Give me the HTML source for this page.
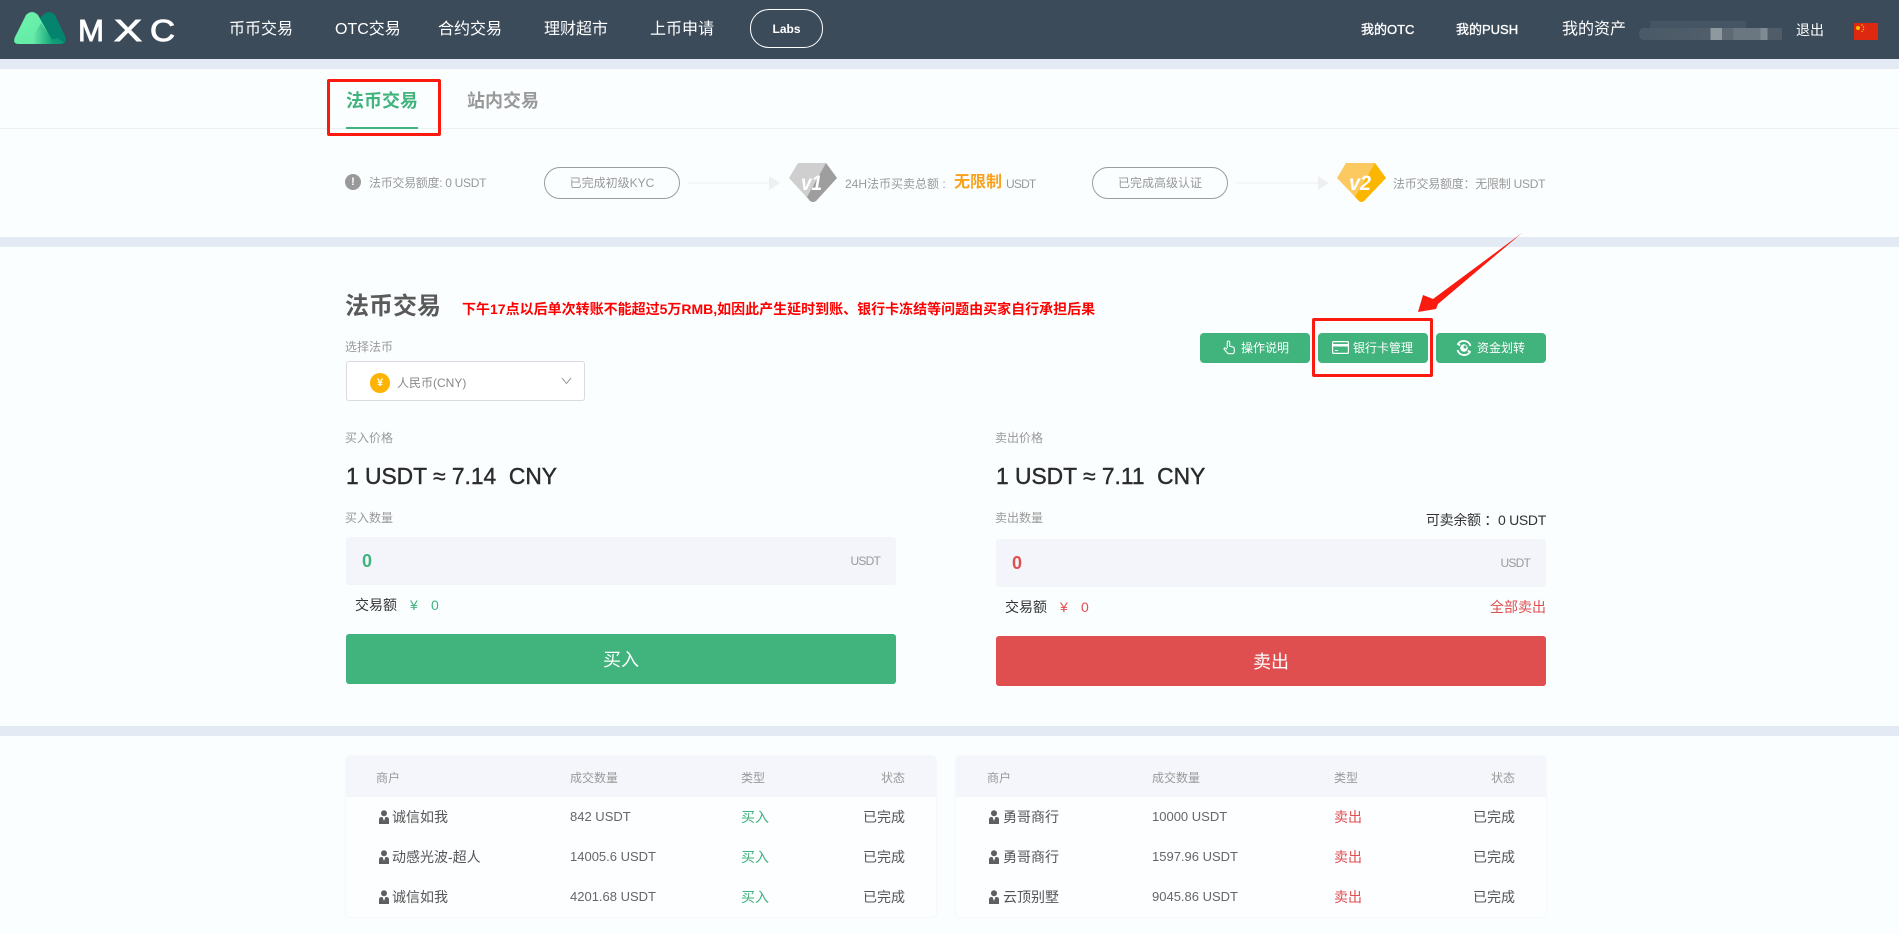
<!DOCTYPE html>
<html lang="zh"><head><meta charset="utf-8"><title>MXC</title>
<style>
html,body{margin:0;padding:0}
body{width:1899px;height:934px;overflow:hidden;position:relative;background:#fbfeff;font-family:"Liberation Sans","Noto Sans CJK SC",sans-serif;color:#333}
.a{position:absolute;white-space:nowrap;line-height:20px;height:20px}
.r{text-align:right}
.box{position:absolute}
.nav{font-size:16px;color:#fff;top:20px}
.g{color:#999;font-size:12px}
.us{letter-spacing:-.8px}
.pill{position:absolute;top:167px;height:30px;width:134px;border:1px solid #9c9c9c;border-radius:16px;text-align:center;line-height:30px;font-size:12px;color:#999;background:#fbfeff}
.btn{position:absolute;top:333px;width:110px;height:30px;background:#41b37d;border-radius:4px;color:#fff;font-size:12px;line-height:30px}
.inp{position:absolute;width:550px;height:48px;background:#f3f5fa;border-radius:3px}
.big{position:absolute;width:550px;height:50px;border-radius:3px;color:#fff;font-size:18px;line-height:52px;text-align:center}
.price{font-size:22.800px;color:#2b2b2b;line-height:30px;height:30px;-webkit-text-stroke:.4px #2b2b2b}
.tb{position:absolute;top:756px;width:590px;height:161px;border-radius:4px;box-shadow:0 0 2px #e9edf4;background:#fcfeff}
.th{position:absolute;left:0;top:0;width:100%;height:41px;background:#f4f6fb;border-radius:4px 4px 0 0}
.n{font-size:14px;color:#555}
.q{font-size:13px;color:#666}
.t14{font-size:14px}
.hb{font-size:13px;color:#fff;-webkit-text-stroke:.35px #fff;top:20px}
</style></head><body>

<!-- Header -->
<div class="box" style="left:0;top:0;width:1899px;height:59px;background:#3c4b5a"></div>
<svg class="box" style="left:0;top:0" width="190" height="59" viewBox="0 0 190 59">
<defs>
<linearGradient id="l1" x1="0" y1="0" x2="1" y2="1"><stop offset="0" stop-color="#6ff3ae"/><stop offset="1" stop-color="#5ee9a3"/></linearGradient>
<linearGradient id="l2" x1="0" y1="0" x2="1" y2="0"><stop offset="0" stop-color="#6fefae"/><stop offset=".85" stop-color="#16a577"/></linearGradient>
</defs>
<path d="M43 15 Q49 9 55 15 L65 36 Q68 44 60 44 H40 L35 24Z" fill="#04836e"/>
<path d="M26 15 Q32 9 38 15 L54 44 H19 Q12 44 15 37Z" fill="url(#l1)"/>
<path d="M41 23 L55 44 H36 Q30 44 32 38Z" fill="url(#l2)"/>
<path d="M55 44 H60 Q62 44 64 42.500 L57 38 L52 39.500Z" fill="#0f9a78"/>
<g fill="#fff" stroke="#fff" stroke-width=".9" font-family="'Liberation Sans',sans-serif" font-size="31">
<text x="78" y="41" textLength="26" lengthAdjust="spacingAndGlyphs">M</text>
<text x="114" y="41" textLength="28" lengthAdjust="spacingAndGlyphs">X</text>
<text x="150" y="41" textLength="25" lengthAdjust="spacingAndGlyphs">C</text>
</g>
</svg>
<div class="a nav" style="left:229px">币币交易</div>
<div class="a nav" style="left:335px">OTC交易</div>
<div class="a nav" style="left:438px">合约交易</div>
<div class="a nav" style="left:544px">理财超市</div>
<div class="a nav" style="left:650px">上币申请</div>
<div class="box" style="left:750px;top:9px;width:71px;height:37px;border:1.5px solid #fff;border-radius:19px;color:#fff;font-size:12px;font-weight:700;text-align:center;line-height:38px">Labs</div>
<div class="a hb" style="left:1361px">我的OTC</div>
<div class="a hb" style="left:1456px">我的PUSH</div>
<div class="a" style="left:1562px;top:20px;font-size:16px;color:#fff">我的资产</div>
<div class="box" style="left:1639px;top:28px;width:143px;height:12px;border-radius:5px 0 0 5px;background:linear-gradient(90deg,#4b5a67,#505d6a 50%,#8e989f 50%,#8e989f 58%,#5d6974 58%,#5d6974 66%,#6a7680 66%,#6a7680 85%,#808a93 85%,#808a93 90%,#505d69 90%)"></div>
<div class="box" style="left:1650px;top:21px;width:96px;height:7px;background:#465563"></div>
<div class="a" style="left:1796px;top:20px;font-size:14px;color:#fff">退出</div>
<svg class="box" style="left:1854px;top:23px" width="24" height="17" viewBox="0 0 24 17"><rect width="24" height="17" fill="#de2910"/><circle cx="4" cy="5" r="2" fill="#f5c400"/><circle cx="8" cy="2" r=".7" fill="#f5c400"/><circle cx="9.500" cy="4" r=".7" fill="#f5c400"/><circle cx="9.500" cy="6.500" r=".7" fill="#f5c400"/><circle cx="8" cy="8.500" r=".7" fill="#f5c400"/></svg>

<!-- Bands -->
<div class="box" style="left:0;top:59px;width:1899px;height:10px;background:#e4eaf4"></div>
<div class="box" style="left:0;top:237px;width:1899px;height:10px;background:#e4eaf4"></div>
<div class="box" style="left:0;top:726px;width:1899px;height:10px;background:#e4eaf4"></div>

<!-- Tabs -->
<div class="box" style="left:0;top:128px;width:1899px;height:1px;background:#eeeff1"></div>
<div class="a" style="left:346px;top:91px;font-size:18px;font-weight:700;color:#41b37d">法币交易</div>
<div class="a" style="left:467px;top:91px;font-size:18px;font-weight:700;color:#999">站内交易</div>
<div class="box" style="left:346px;top:127px;width:72px;height:2px;background:#41b37d"></div>
<div class="box" style="left:327px;top:79px;width:108px;height:51px;border:3px solid #fb1a10;border-radius:2px"></div>

<!-- Steps -->
<div class="box" style="left:345px;top:174px;width:16px;height:16px;border-radius:50%;background:#999;color:#fff;font-size:11px;font-weight:700;text-align:center;line-height:16px">!</div>
<div class="a g" style="left:369px;top:173px;letter-spacing:-.3px">法币交易额度: 0 USDT</div>
<div class="pill" style="left:544px">已完成初级KYC</div>
<svg class="box" style="left:688px;top:175px" width="92" height="16"><rect x="0" y="7.500" width="81" height="1" fill="#eeeff1"/><path d="M81 1 L92 8 L81 15Z" fill="#eeeff1"/></svg>
<svg class="box" style="left:789px;top:163px" width="48" height="40" viewBox="0 0 48 40">
<path d="M9 0 H37 L48 15 L27 38 Q24 40 21 38 L0 15Z" fill="#cfcfcf"/>
<path d="M37 0 L48 15 L27 38 Q24 40 21 38 L18 34Z" fill="#9e9e9e"/>
<text x="12" y="27" font-family="'Liberation Sans',sans-serif" font-size="21" font-weight="700" font-style="italic" fill="#fff" textLength="21" lengthAdjust="spacingAndGlyphs">v1</text>
</svg>
<div class="a g" style="left:845px;top:174px">24H法币买卖总额 :</div>
<div class="a" style="left:954px;top:173px;font-size:16px;font-weight:700;color:#f9a11b">无限制</div>
<div class="a g us" style="left:1006px;top:174px">USDT</div>
<div class="pill" style="left:1092px">已完成高级认证</div>
<svg class="box" style="left:1236px;top:175px" width="93" height="16"><rect x="0" y="7.500" width="82" height="1" fill="#eeeff1"/><path d="M82 1 L93 8 L82 15Z" fill="#eeeff1"/></svg>
<svg class="box" style="left:1337px;top:163px" width="49" height="40" viewBox="0 0 49 40">
<path d="M9 0 H38 L49 15 L27 38 Q24.500 40 22 38 L0 15Z" fill="#fbc95f"/>
<path d="M38 0 L49 15 L27 38 Q24.500 40 22 38 L18 34Z" fill="#fdb600"/>
<text x="12" y="27" font-family="'Liberation Sans',sans-serif" font-size="21" font-weight="700" font-style="italic" fill="#fff" textLength="22" lengthAdjust="spacingAndGlyphs">v2</text>
</svg>
<div class="a g" style="left:1393px;top:174px;letter-spacing:-.25px">法币交易额度：无限制 USDT</div>

<!-- Title -->
<div class="a" style="left:345px;top:297px;font-size:24px;font-weight:700;color:#5a5a5a">法币交易</div>
<div class="a" style="left:462px;top:299px;font-size:14px;font-weight:700;color:#ff0000">下午17点以后单次转账不能超过5万RMB,如因此产生延时到账、银行卡冻结等问题由买家自行承担后果</div>
<div class="a g" style="left:345px;top:337px">选择法币</div>
<div class="box" style="left:346px;top:361px;width:237px;height:38px;border:1px solid #d9dbe0;border-radius:3px;background:#fff"></div>
<div class="box" style="left:370px;top:373px;width:20px;height:20px;border-radius:50%;background:#fdb300;color:#fff;font-size:11px;font-weight:700;text-align:center;line-height:20px">¥</div>
<div class="a g" style="left:397px;top:373px;color:#888">人民币(CNY)</div>
<svg class="box" style="left:561px;top:377px" width="11" height="8"><path d="M1 1 L5.500 6.500 L10 1" fill="none" stroke="#999" stroke-width="1"/></svg>

<!-- Action buttons -->
<div class="btn" style="left:1200px">
<svg class="box" style="left:22px;top:7px" width="14" height="15" viewBox="0 0 14 17"><path d="M5 9 V2.500 a1.400 1.400 0 0 1 2.800 0 V7 l4 1 Q13 8.500 13 10 V13 Q13 15.500 10.500 15.500 H7 Q5.500 15.500 4.500 14 L1.500 10.500 Q1 9 2.500 9 L5 10.500" fill="none" stroke="#fff" stroke-width="1.200"/></svg>
<span style="position:absolute;left:41px">操作说明</span></div>
<div class="btn" style="left:1318px">
<svg class="box" style="left:14px;top:8px" width="17" height="13" viewBox="0 0 17 13"><rect x=".6" y=".6" width="15.800" height="11.800" rx="1" fill="none" stroke="#fff" stroke-width="1.200"/><rect x="0" y="3" width="17" height="2.500" fill="#fff"/><rect x="3" y="9" width="3" height="1" fill="#fff"/></svg>
<span style="position:absolute;left:35px">银行卡管理</span></div>
<div class="btn" style="left:1436px">
<svg class="box" style="left:20px;top:7px" width="16" height="16" viewBox="0 0 16 16"><path d="M14.500 6 A7 7 0 0 0 2 4 L4 5.500 M1.500 10 A7 7 0 0 0 14 12 L12 10.500" fill="none" stroke="#fff" stroke-width="1.800"/><circle cx="8" cy="8" r="3.800" fill="#fff"/><circle cx="9" cy="7" r="1.500" fill="#41b37d"/></svg>
<span style="position:absolute;left:41px">资金划转</span></div>

<!-- Red box + arrow -->
<div class="box" style="left:1312px;top:318px;width:115px;height:53px;border:3px solid #fb1a10;border-radius:2px"></div>
<svg class="box" style="left:1410px;top:228px" width="120" height="90" viewBox="0 0 120 90"><path d="M112 5 L23 71 L13 67 L8 84 L26 81 L28 76Z" fill="#fb1a10"/></svg>

<!-- Buy -->
<div class="a g" style="left:345px;top:428px">买入价格</div>
<div class="a price" style="left:346px;top:461px">1 USDT ≈ 7.14&nbsp; CNY</div>
<div class="a g" style="left:345px;top:508px">买入数量</div>
<div class="inp" style="left:346px;top:537px"></div>
<div class="a" style="left:362px;top:551px;font-size:18px;font-weight:700;color:#41b37d">0</div>
<div class="a g r us" style="left:780px;width:100px;top:551px">USDT</div>
<div class="a t14" style="left:355px;top:595px">交易额</div>
<div class="a t14" style="left:410px;top:595px;color:#41b37d">¥</div>
<div class="a t14" style="left:431px;top:595px;color:#41b37d">0</div>
<div class="big" style="left:346px;top:634px;background:#41b37d">买入</div>

<!-- Sell -->
<div class="a g" style="left:995px;top:428px">卖出价格</div>
<div class="a price" style="left:996px;top:461px">1 USDT ≈ 7.11&nbsp; CNY</div>
<div class="a g" style="left:995px;top:508px">卖出数量</div>
<div class="a r" style="left:1346px;width:200px;top:510px;font-size:14px;letter-spacing:-.3px">可卖余额 ：0 USDT</div>
<div class="inp" style="left:996px;top:539px"></div>
<div class="a" style="left:1012px;top:553px;font-size:18px;font-weight:700;color:#e04f50">0</div>
<div class="a g r us" style="left:1430px;width:100px;top:553px">USDT</div>
<div class="a t14" style="left:1005px;top:597px">交易额</div>
<div class="a t14" style="left:1060px;top:597px;color:#e04f50">¥</div>
<div class="a t14" style="left:1081px;top:597px;color:#e04f50">0</div>
<div class="a t14 r" style="left:1446px;width:100px;top:597px;color:#e04f50">全部卖出</div>
<div class="big" style="left:996px;top:636px;background:#e04f50">卖出</div>

<!-- Left table -->
<div class="tb" style="left:346px"><div class="th"></div></div>
<div class="a g" style="left:376px;top:768px">商户</div>
<div class="a g" style="left:570px;top:768px">成交数量</div>
<div class="a g" style="left:741px;top:768px">类型</div>
<div class="a g r" style="left:805px;width:100px;top:768px">状态</div>
<svg width="0" height="0" style="position:absolute"><defs><g id="u"><circle cx="5" cy="3.200" r="3" fill="#5f5f5f"/><path d="M0 14 V9.500 Q0 7.500 2 7 L3.500 7 L5 11 L6.500 7 L8 7 Q10 7.500 10 9.500 V14Z" fill="#5f5f5f"/></g></defs></svg>

<svg class="box" style="left:379px;top:810px" width="10" height="14"><use href="#u"/></svg>
<div class="a n" style="left:392px;top:807px">诚信如我</div>
<div class="a q" style="left:570px;top:807px">842 USDT</div>
<div class="a t14" style="left:741px;top:807px;color:#41b37d">买入</div>
<div class="a n r" style="left:805px;width:100px;top:807px">已完成</div>

<svg class="box" style="left:379px;top:850px" width="10" height="14"><use href="#u"/></svg>
<div class="a n" style="left:392px;top:847px">动感光波-超人</div>
<div class="a q" style="left:570px;top:847px">14005.6 USDT</div>
<div class="a t14" style="left:741px;top:847px;color:#41b37d">买入</div>
<div class="a n r" style="left:805px;width:100px;top:847px">已完成</div>

<svg class="box" style="left:379px;top:890px" width="10" height="14"><use href="#u"/></svg>
<div class="a n" style="left:392px;top:887px">诚信如我</div>
<div class="a q" style="left:570px;top:887px">4201.68 USDT</div>
<div class="a t14" style="left:741px;top:887px;color:#41b37d">买入</div>
<div class="a n r" style="left:805px;width:100px;top:887px">已完成</div>

<!-- Right table -->
<div class="tb" style="left:956px"><div class="th"></div></div>
<div class="a g" style="left:987px;top:768px">商户</div>
<div class="a g" style="left:1152px;top:768px">成交数量</div>
<div class="a g" style="left:1334px;top:768px">类型</div>
<div class="a g r" style="left:1415px;width:100px;top:768px">状态</div>

<svg class="box" style="left:989px;top:810px" width="10" height="14"><use href="#u"/></svg>
<div class="a n" style="left:1003px;top:807px">勇哥商行</div>
<div class="a q" style="left:1152px;top:807px">10000 USDT</div>
<div class="a t14" style="left:1334px;top:807px;color:#e04f50">卖出</div>
<div class="a n r" style="left:1415px;width:100px;top:807px">已完成</div>

<svg class="box" style="left:989px;top:850px" width="10" height="14"><use href="#u"/></svg>
<div class="a n" style="left:1003px;top:847px">勇哥商行</div>
<div class="a q" style="left:1152px;top:847px">1597.96 USDT</div>
<div class="a t14" style="left:1334px;top:847px;color:#e04f50">卖出</div>
<div class="a n r" style="left:1415px;width:100px;top:847px">已完成</div>

<svg class="box" style="left:989px;top:890px" width="10" height="14"><use href="#u"/></svg>
<div class="a n" style="left:1003px;top:887px">云顶别墅</div>
<div class="a q" style="left:1152px;top:887px">9045.86 USDT</div>
<div class="a t14" style="left:1334px;top:887px;color:#e04f50">卖出</div>
<div class="a n r" style="left:1415px;width:100px;top:887px">已完成</div>

</body></html>
